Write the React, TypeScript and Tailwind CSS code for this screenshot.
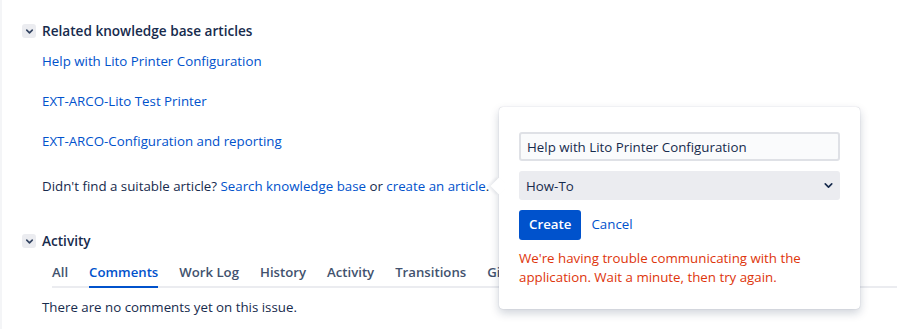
import { ChevronDown } from "lucide-react";

const font = { fontFamily: '"Segoe UI", "Open Sans", "Liberation Sans", sans-serif' };

function SectionToggle({ title }: { title: string }) {
  return (
    <div className="flex h-[14px] items-center gap-[6px]">
      <span className="flex h-[14px] w-[14px] items-center justify-center rounded-[3px] bg-[#ebecf0]">
        <ChevronDown size={11} strokeWidth={3.5} className="text-[#344563]" />
      </span>
      <h2 className="text-[13.6px] font-semibold leading-5 text-[#172b4d]">{title}</h2>
    </div>
  );
}

const articles = [
  "Help with Lito Printer Configuration",
  "EXT-ARCO-Lito Test Printer",
  "EXT-ARCO-Configuration and reporting",
];

const tabs = ["All", "Comments", "Work Log", "History", "Activity", "Transitions", "Git"];

export default function App() {
  return (
    <div
      className="relative h-[329px] w-[897px] overflow-hidden border-l-[2px] border-[#f4f5f7] bg-white text-[13.3px] text-[#172b4d]"
      style={font}
    >
      <div className="pl-[20px] pt-[24px]">
        <SectionToggle title="Related knowledge base articles" />
        <ul className="mt-[13px] flex flex-col gap-[20px] pl-[20px]">
          {articles.map((a) => (
            <li key={a} className="leading-5">
              <a className="text-[#0052cc]" href="#">
                {a}
              </a>
            </li>
          ))}
        </ul>
        <p className="mt-[25px] pl-[20px] leading-5">
          Didn&apos;t find a suitable article?{" "}
          <a className="text-[#0052cc]" href="#">
            Search knowledge base
          </a>{" "}
          or{" "}
          <a className="text-[#0052cc]" href="#">
            create an article
          </a>
          .
        </p>

        <div className="mt-[38px]">
          <SectionToggle title="Activity" />
        </div>
        <div className="ml-[30px] mt-[14px] flex gap-[21px] border-b-[2px] border-[#ebecf0] text-[13.2px]">
          {tabs.map((t) => (
            <span
              key={t}
              className={
                t === "Comments"
                  ? "-mb-[2px] border-b-[2px] border-[#0052cc] pb-[4px] font-semibold leading-5 text-[#0052cc]"
                  : "pb-[4px] font-semibold leading-5 text-[#42526e]"
              }
            >
              {t}
            </span>
          ))}
        </div>
        <p className="mt-[9px] pl-[20px] leading-5">There are no comments yet on this issue.</p>
      </div>

      {/* create article popup */}
      <div className="absolute left-[497px] top-[107px] w-[361px] rounded-[4px] bg-white px-[20px] pb-[22px] pt-[25px] shadow-[0_4px_10px_rgba(9,30,66,0.2),0_0_1px_rgba(9,30,66,0.3)]">
        <span className="absolute left-[-6px] top-[73px] h-[12px] w-[12px] rotate-45 bg-white shadow-[-2px_2px_3px_rgba(9,30,66,0.08)]" />
        <div className="flex h-[29px] items-center rounded-[3px] border-[2px] border-[#dfe1e6] bg-[#fafbfc] px-[6px] leading-5">
          Help with Lito Printer Configuration
        </div>
        <div className="mt-[10px] flex h-[29px] items-center justify-between rounded-[3px] bg-[#ebecf0] pl-[7px] pr-[5px] leading-5">
          <span>How-To</span>
          <ChevronDown size={13} strokeWidth={3} className="text-[#172b4d]" />
        </div>
        <div className="mt-[10px] flex items-center gap-[10px]">
          <button className="h-[30px] rounded-[3px] bg-[#0052cc] px-[10px] font-semibold text-white">
            Create
          </button>
          <a className="text-[#0052cc]" href="#">
            Cancel
          </a>
        </div>
        <p className="mt-[9px] leading-[19px] text-[#de350b]">
          We&apos;re having trouble communicating with the application. Wait a minute, then try again.
        </p>
      </div>
    </div>
  );
}
